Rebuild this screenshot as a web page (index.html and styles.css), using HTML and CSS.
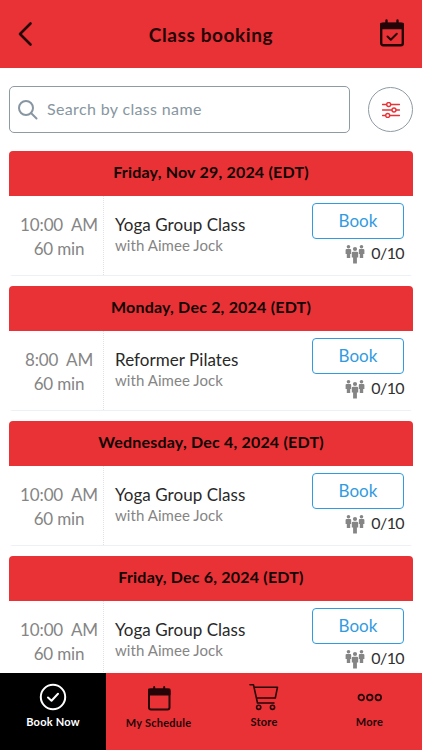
FILE: index.html
```html
<!DOCTYPE html>
<html lang="en">
<head>
    <meta charset="UTF-8">
    <meta name="viewport" content="width=device-width, initial-scale=1.0">
    <title>Class booking</title>
    <link rel="stylesheet" href="styles.css">
</head>
<body>
    <!-- people icon shared by all the class rows -->
    <svg class="symbols" width="0" height="0">
        <symbol id="people" viewBox="0 0 20 20">
            <circle cx="3.500" cy="2.800" r="1.800"/>
            <path d="M1.800 5h3.400q1 0 1 1v4H5.200V14H1.800V10H.6V6q0-1 1.200-1z"/>
            <circle cx="16.500" cy="2.800" r="1.800"/>
            <path d="M14.800 5h3.400q1.200 0 1.200 1v4h-1.200V14h-3.400V10h-1V6q0-1 1-1z"/>
            <circle cx="10" cy="5" r="2.100"/>
            <path d="M8.200 7.800h3.600q1.400 0 1.400 1.200v4.500h-1.300V19.500H8.100V13.500H6.800V9q0-1.200 1.400-1.200z"/>
        </symbol>
    </svg>

    <header class="header">
        <svg class="back" width="16" height="26" viewBox="0 0 16 26"><path d="M12.500 2.500L2 13l10.500 10.500"/></svg>
        <h1>Class booking</h1>
        <svg class="calendar" width="24" height="28" viewBox="0 0 24 28">
            <rect x="1.200" y="4.700" width="21.600" height="21.600" rx="2"/>
            <path class="fill" d="M1.200 5h21.600v4H1.200z"/>
            <path d="M6.500 1.500v4M17.500 1.500v4"/>
            <path class="check" d="M7.500 17.500l3.300 3.300 6-6"/>
        </svg>
    </header>

    <div class="search-row">
        <label class="search">
            <svg width="20" height="20" viewBox="0 0 20 20"><circle cx="8" cy="8" r="7"/><path d="M13 13l5.500 5.500"/></svg>
            <input type="text" placeholder="Search by class name">
        </label>
        <button class="filter">
            <svg width="18" height="16" viewBox="0 0 18 16">
                <path d="M.5 2.500h4M9 2.500h8.500M.5 8h9M14.200 8h3.300M.5 13.500H3.500M8 13.500h9.500"/>
                <circle cx="6.700" cy="2.500" r="2"/><circle cx="12" cy="8" r="2"/><circle cx="5.700" cy="13.500" r="2"/>
            </svg>
        </button>
    </div>

    <main class="classes">
        <section class="day">
            <h2>Friday, Nov 29, 2024 (EDT)</h2>
            <div class="class-row">
                <div class="time"><span>10:00&nbsp; AM</span><span>60 min</span></div>
                <div class="info"><span>Yoga Group Class</span><span class="teacher">with Aimee Jock</span></div>
                <div class="action">
                    <button class="book">Book</button>
                    <div class="spots"><svg width="20" height="20"><use href="#people"/></svg><span>0/10</span></div>
                </div>
            </div>
        </section>

        <section class="day">
            <h2>Monday, Dec 2, 2024 (EDT)</h2>
            <div class="class-row">
                <div class="time"><span>8:00&nbsp; AM</span><span>60 min</span></div>
                <div class="info"><span>Reformer Pilates</span><span class="teacher">with Aimee Jock</span></div>
                <div class="action">
                    <button class="book">Book</button>
                    <div class="spots"><svg width="20" height="20"><use href="#people"/></svg><span>0/10</span></div>
                </div>
            </div>
        </section>

        <section class="day">
            <h2>Wednesday, Dec 4, 2024 (EDT)</h2>
            <div class="class-row">
                <div class="time"><span>10:00&nbsp; AM</span><span>60 min</span></div>
                <div class="info"><span>Yoga Group Class</span><span class="teacher">with Aimee Jock</span></div>
                <div class="action">
                    <button class="book">Book</button>
                    <div class="spots"><svg width="20" height="20"><use href="#people"/></svg><span>0/10</span></div>
                </div>
            </div>
        </section>

        <section class="day">
            <h2>Friday, Dec 6, 2024 (EDT)</h2>
            <div class="class-row">
                <div class="time"><span>10:00&nbsp; AM</span><span>60 min</span></div>
                <div class="info"><span>Yoga Group Class</span><span class="teacher">with Aimee Jock</span></div>
                <div class="action">
                    <button class="book">Book</button>
                    <div class="spots"><svg width="20" height="20"><use href="#people"/></svg><span>0/10</span></div>
                </div>
            </div>
        </section>
    </main>

    <nav class="tabs">
        <a class="tab active">
            <svg width="28" height="28" viewBox="0 0 28 28"><circle cx="14" cy="14" r="12.200"/><path d="M9 14.500l3.500 3.300 6.500-7"/></svg>
            <span>Book Now</span>
        </a>
        <a class="tab schedule">
            <svg width="24" height="28" viewBox="0 0 24 28">
                <rect x="2" y="6.500" width="20.500" height="20" rx="2"/>
                <path class="fill" d="M2 6.500h20.500v5H2z"/>
                <path d="M7.200 4v4M17.200 4v4"/>
            </svg>
            <span>My Schedule</span>
        </a>
        <a class="tab store">
            <svg width="30" height="28" viewBox="0 0 30 28">
                <path d="M1 1.800h3.500L8.500 20H25M5.500 4.200H28.500L26.300 15H7.500"/>
                <circle cx="9.700" cy="24.300" r="2.100"/><circle cx="23.500" cy="24.300" r="2.100"/>
            </svg>
            <span>Store</span>
        </a>
        <a class="tab more">
            <svg width="26" height="28" viewBox="0 0 26 28"><circle cx="4.300" cy="14.500" r="2.800"/><circle cx="12.800" cy="14.500" r="2.800"/><circle cx="21.300" cy="14.500" r="2.800"/></svg>
            <span>More</span>
        </a>
    </nav>
</body>
</html>
```

FILE: styles.css
```css
* {
    box-sizing: border-box;
}

body {
    display: flex;
    flex-direction: column;
    height: 100vh;
    margin: 0;
    overflow: hidden;
    background-color: white;
    font-family: Lato, "Open Sans", sans-serif;
}

svg {
    display: block;
    flex: none;
    fill: none;
    stroke: currentColor;
    stroke-width: 2;
    stroke-linecap: round;
    stroke-linejoin: round;
}

svg .fill {
    fill: currentColor;
}

.symbols {
    position: absolute;
}

.header {
    display: flex;
    flex: none;
    align-items: center;
    justify-content: space-between;
    height: 68px;
    padding: 0 18px;
    background-color: #e93236;
    color: #250508;
}

.header h1 {
    margin: 0 0 0 8px;
    font-size: 19px;
    letter-spacing: 0.6px;
}

.back {
    stroke-width: 2.6;
}

.calendar {
    margin-top: -2px;
    stroke-width: 2.4;
}

.calendar .check {
    stroke-width: 2;
}

.search-row {
    display: flex;
    flex: none;
    align-items: center;
    justify-content: space-between;
    padding: 18px 9px 18px;
}

.search {
    display: flex;
    align-items: center;
    gap: 9px;
    width: 341px;
    height: 47px;
    padding-left: 8px;
    border: 1px solid #8e9ba4;
    border-radius: 5px;
    color: #8796a1;
}

.search input {
    width: 280px;
    padding: 0 0 2px;
    border: none;
    outline: none;
    font: 16px Lato, "Open Sans", sans-serif;
    letter-spacing: 0.35px;
}

.search input::placeholder {
    color: #8796a1;
}

.filter {
    display: flex;
    align-items: center;
    justify-content: center;
    width: 45px;
    height: 45px;
    padding: 0;
    border: 1px solid #8e9ba4;
    border-radius: 50%;
    background-color: white;
    color: #e93236;
}

.filter svg {
    stroke-width: 1.4;
}

.classes {
    display: flex;
    flex: 1;
    flex-direction: column;
    gap: 10px;
    min-height: 0;
    padding: 0 9px;
    overflow: hidden;
}

.day {
    flex: none;
    height: 125px;
    border-radius: 4px;
    overflow: hidden;
}

.day h2 {
    height: 45px;
    margin: 0;
    background-color: #e93236;
    color: #120304;
    font-size: 16px;
    line-height: 42px;
    text-align: center;
    letter-spacing: 0.2px;
}

.class-row {
    display: flex;
    height: 80px;
    border-bottom: 1px solid #edf0f4;
}

.time {
    display: flex;
    flex-direction: column;
    align-items: center;
    width: 95px;
    padding: 17px 0 0 6px;
    border-right: 1px dotted #e2e2e6;
    color: #858585;
    font-size: 17px;
    line-height: 24px;
    letter-spacing: -0.15px;
    white-space: nowrap;
}

.info {
    display: flex;
    flex: 1;
    flex-direction: column;
    padding: 19px 0 0 11px;
    color: #292929;
    font-size: 17px;
    line-height: 20px;
    letter-spacing: 0.05px;
}

.teacher {
    color: #858585;
    font-size: 15px;
}

.action {
    display: flex;
    flex-direction: column;
    align-items: flex-end;
    width: 101px;
    padding: 7px 9px 0 0;
}

.book {
    width: 92px;
    height: 36px;
    padding: 0 0 2px;
    border: 1px solid #329bdf;
    border-radius: 4px;
    background-color: white;
    color: #329bdf;
    font: 17px Lato, "Open Sans", sans-serif;
}

.spots {
    display: flex;
    align-items: center;
    gap: 6px;
    margin-top: 3px;
    color: #303030;
    font-size: 16px;
    line-height: 20px;
    letter-spacing: -0.6px;
}

.spots svg {
    margin-top: 2px;
    fill: #858585;
    stroke: none;
}

.tabs {
    display: grid;
    flex: none;
    grid-template-columns: 106px 105px 106px 105px;
    height: 77px;
    background-color: #e93236;
    color: #250508;
}

.tab {
    display: flex;
    flex-direction: column;
    align-items: center;
    gap: 4px;
    padding-top: 10px;
    font-size: 11px;
    font-weight: bold;
    line-height: 14px;
    letter-spacing: 0.25px;
}

.active {
    background-color: black;
    color: white;
}

.schedule {
    gap: 5px;
}

.store svg {
    stroke-width: 1.6;
}

.more svg {
    stroke-width: 1.7;
}
```
